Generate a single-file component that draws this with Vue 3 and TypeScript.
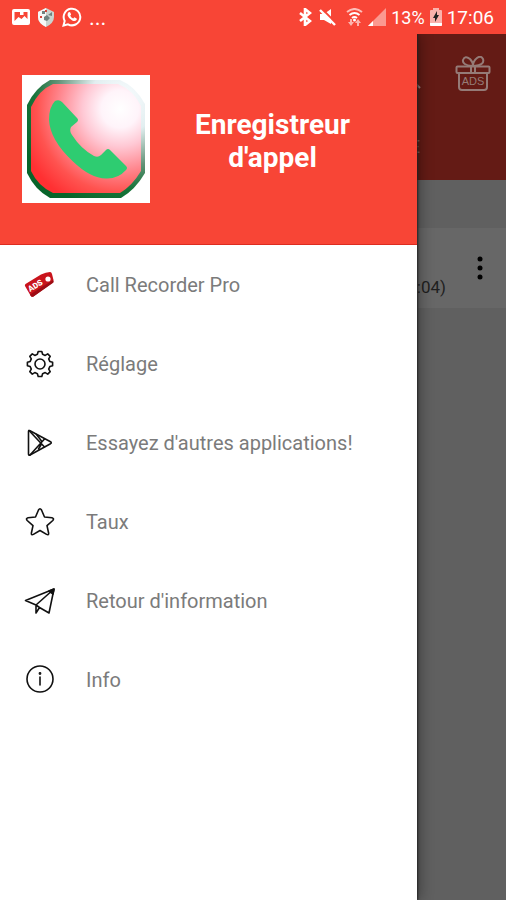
<script setup lang="ts">
import { ref } from 'vue'

type IconName = 'tag' | 'gear' | 'play' | 'star' | 'plane' | 'info'

interface MenuEntry {
  icon: IconName
  label: string
}

const entries: MenuEntry[] = [
  { icon: 'tag', label: 'Call Recorder Pro' },
  { icon: 'gear', label: 'Réglage' },
  { icon: 'play', label: "Essayez d'autres applications!" },
  { icon: 'star', label: 'Taux' },
  { icon: 'plane', label: "Retour d'information" },
  { icon: 'info', label: 'Info' },
]

const battery = ref('13%')
const clock = ref('17:06')
</script>

<template>
  <div class="screen">
    <header class="status">
      <div class="status-left">
        <svg width="18" height="16" viewBox="0 0 18 16" aria-hidden="true">
          <path fill="#fff" fill-rule="evenodd" d="M2 0h14q2 0 2 2v12q0 2-2 2H2q-2 0-2-2V2q0-2 2-2zM2.500 3v9l4-4 3 2 3-3 3 3V3h-4v3H8V3z" />
        </svg>
        <svg width="18" height="19" viewBox="0 0 18 19" aria-hidden="true">
          <path fill="#c9d3cf" d="M9 0 17 4V9q0 6-8 10Q1 15 1 9V4z" />
          <path fill="#f6f8f7" d="M9 0 1 4v5q0 6 8 10z" />
          <path fill="#70827f" d="M5 3h3v3H5zM11 7l4-3v4zM7 9l3-2 3 3-3 3-3-1z" />
          <path fill="#d6453a" d="M3 8h2v2H3zM8 2h2v2H8z" />
        </svg>
        <svg width="20" height="20" viewBox="0 0 20 20" aria-hidden="true">
          <path fill="none" stroke="#fff" stroke-width="2" d="M1.500 18.500 2.700 14A8.300 8.300 0 1 1 6 17.300z" />
          <path fill="#fff" d="M6.500 5.200q1.300-.8 1.900.5l.7 1.700-.9 1.300q1 2 3 2.800l1.200-1.200 2.200 1.100q.6.500-.1 1.700-1.500 1.700-4.300.3-3.400-1.600-4.600-5-.3-2 .9-3.200z" />
        </svg>
        <span class="dots">...</span>
      </div>
      <div class="status-right">
        <svg width="13" height="18" viewBox="0 0 13 18" aria-hidden="true">
          <path fill="none" stroke="#fff" stroke-width="2.600" d="m1 5 10 8-5 4V1l5 4-10 8" />
        </svg>
        <svg class="mute" width="18" height="17" viewBox="0 0 18 17" aria-hidden="true">
          <path fill="#fff" d="M1 5h4l7-5v15l-7-4H1z" />
          <path stroke="#f84536" stroke-width="2" d="m3 0 14 14" />
          <path stroke="#fff" stroke-width="2.400" d="m1 1 15 15" />
        </svg>
        <svg width="17" height="18" viewBox="0 0 17 18" aria-hidden="true">
          <g fill="none" stroke="#fff" stroke-width="2">
            <path opacity=".65" d="M1 4q7.500-6 15 0" />
            <path d="M3.500 7q5-4 10 0M6 10q2.500-2 5 0" />
          </g>
          <path fill="#fff" opacity=".6" d="m5 18-3-4h2v-3h2v3h2zM12 11l3 4h-2v3h-2v-3H9z" />
          <circle cx="8.500" cy="12" r="1.500" fill="#fff" />
        </svg>
        <svg width="18" height="18" viewBox="0 0 18 18" aria-hidden="true">
          <path fill="#fff" opacity=".45" d="M18 0v18H0z" />
          <path fill="#fff" d="M5 13v5H0z" />
        </svg>
        <span class="battery">{{ battery }}</span>
        <svg width="12" height="18" viewBox="0 0 12 18" aria-hidden="true">
          <path fill="#fbb2ac" d="M3 0h6v2h2q1 0 1 1v14q0 1-1 1H1q-1 0-1-1V3q0-1 1-1h2z" />
          <path fill="#fff" d="M0 15h12v2q0 1-1 1H1q-1 0-1-1z" />
          <path fill="#222" d="M7 3 3 10h2v4l4-7H7z" />
        </svg>
        <time>{{ clock }}</time>
      </div>
    </header>

    <div class="body">
      <main class="page">
        <div class="appbar">
          <div class="tools">
            <svg width="24" height="24" viewBox="0 0 24 24" aria-hidden="true">
              <path fill="none" stroke="#a08480" stroke-width="2" d="M14 13l7 7M16 8A7 7 0 1 1 2 8a7 7 0 0 1 14 0z" />
            </svg>
            <button type="button" class="gift" aria-label="ADS">
              <svg width="36" height="36" viewBox="0 0 36 36" aria-hidden="true">
                <g fill="none" stroke="#957b77" stroke-width="2" stroke-linejoin="round">
                  <rect x="1.500" y="10.500" width="33" height="6.500" rx="1" />
                  <path d="M4 17V31q0 3 3 3h22q3 0 3-3V17M16 10.500V17M20 10.500V17" />
                  <path d="M17 10Q7 9 8 4q2-5 7-1 3 3 3 7Q18 5 22 2q4-3 6 1 2 6-9 7" />
                </g>
                <text x="18" y="29" text-anchor="middle" class="gift-text">ADS</text>
              </svg>
            </button>
          </div>
          <span class="tab">E</span>
        </div>
        <div class="strip"></div>
        <div class="record">
          <span class="duration">:04)</span>
          <button type="button" class="more" aria-label="Options">
            <svg width="6" height="24" viewBox="0 0 6 24" aria-hidden="true">
              <circle cx="3" cy="3" r="2.500" />
              <circle cx="3" cy="12" r="2.500" />
              <circle cx="3" cy="21" r="2.500" />
            </svg>
          </button>
        </div>
      </main>

      <aside class="drawer">
        <div class="banner">
          <svg class="logo" width="128" height="128" viewBox="0 0 128 128" aria-hidden="true">
            <defs>
              <radialGradient id="shine" gradientUnits="userSpaceOnUse" cx="98" cy="34" r="104">
                <stop offset="0" stop-color="#fff" />
                <stop offset=".18" stop-color="#fff4fa" />
                <stop offset=".36" stop-color="#ffc8d4" />
                <stop offset=".58" stop-color="#ff8a92" />
                <stop offset=".8" stop-color="#ff5350" />
                <stop offset="1" stop-color="#ff3032" />
              </radialGradient>
              <radialGradient id="rim" gradientUnits="userSpaceOnUse" cx="102" cy="24" r="112">
                <stop offset="0" stop-color="#fafdff" />
                <stop offset=".3" stop-color="#e2eef0" />
                <stop offset=".6" stop-color="#66947a" />
                <stop offset=".8" stop-color="#17743a" />
                <stop offset="1" stop-color="#08642a" />
              </radialGradient>
            </defs>
            <path fill="#fff" d="M0 0h128v128H0z" />
            <path fill="url(#rim)" d="M28 5h70q15 6 25 24v69q-10 17-24 25H28Q13 115 5 98V30Q13 13 28 5z" />
            <path fill="url(#shine)" d="M31 9h65q15 6 23 22v65q-9 15-21 22H31Q16 111 9 96V32Q17 15 31 9z" />
            <path fill="#2ecc71" d="M33 26q4-2 7 1l15 16q2 2 0 4l-6 5q-2 4 1 8 9 14 22 21 4 2 7-1l5-5q2-2 4 0l16 16q2 2 0 4-8 9-20 8.500-16-.5-33-17Q28 65 27 45q0-13 6-19z" />
          </svg>
          <h1>Enregistreur d'appel</h1>
        </div>
        <nav>
          <a v-for="entry in entries" :key="entry.label" href="#" class="row">
            <svg class="icon" width="32" height="32" viewBox="0 0 32 32" aria-hidden="true">
              <template v-if="entry.icon === 'tag'">
                <path fill="#c9141c" d="M1.500 15 17 5.500q5-2.500 9-2.500 1.500 0 2 2l1.500 6q0 2-1.500 3L9.500 27.500q-2 1-3-1L1 17q-.5-1 .5-2z" />
                <path fill="#9d0c13" d="m6 25.500 23-14.500.8 2q-.3.600-1.300 1.200L9.500 27.500q-2 1-3-1z" />
                <circle cx="24" cy="10" r="2.600" fill="#fff" />
                <text x="6" y="23" transform="rotate(-31 6 23)" class="tag-text">ADS</text>
              </template>
              <g v-else class="line">
                <template v-if="entry.icon === 'gear'">
                  <path d="M14.200 3.500h3.600l.8 2.800 2.600 1.100 2.500-1.500 2.500 2.500-1.500 2.500 1.100 2.500 2.800.8v3.600l-2.800.8-1.100 2.500 1.500 2.500-2.500 2.500-2.500-1.500-2.600 1.100-.8 2.800h-3.600l-.8-2.800-2.600-1.100-2.500 1.500-2.500-2.500 1.500-2.500-1.100-2.500-2.800-.8v-3.600l2.800-.8 1.100-2.500-1.500-2.500 2.500-2.500 2.500 1.500 2.600-1.100z" />
                  <circle cx="16" cy="16" r="5" />
                </template>
                <template v-else-if="entry.icon === 'play'">
                  <path d="M4.500 4.500q0-1.500 1.500-.8l20.500 11q1.500 1 0 2L6 28q-1.500.8-1.500-1z" />
                  <path d="M5 3.500 20.500 20M6 28l14.500-16M12.500 7.500 17.500 14M17.500 17l-3 5" />
                </template>
                <path v-else-if="entry.icon === 'star'" d="M14.500 4q1.500-2.500 3 0l3 7 7.500.8q2.500.7.800 2.700L23 19.700l1.600 7.300q.2 2.500-2 1.400L16 24.500l-6.600 3.900q-2.200 1.100-2-1.400L9 19.700l-5.800-5.200q-1.700-2 .8-2.700l7.500-.8z" />
                <template v-else-if="entry.icon === 'plane'">
                  <path d="M1.500 15.500 30 4 25 28l-9.500-5.500L12 28v-8zM12 20 30 4M12 28l3.500-5.500L12 20" />
                  <path class="solid" d="M25 6l5-2-1 5z" />
                </template>
                <template v-else>
                  <circle cx="16" cy="15" r="13" />
                  <path d="M16 13v8" />
                  <circle cx="16" cy="9.500" r=".6" class="solid" />
                </template>
              </g>
            </svg>
            <span>{{ entry.label }}</span>
          </a>
        </nav>
      </aside>
    </div>
  </div>
</template>

<style>
body {
  margin: 0;
}
</style>

<style scoped>
.screen {
  display: flex;
  flex-direction: column;
  min-height: 100vh;
  font-family: Roboto, 'Liberation Sans', sans-serif;
  background: #606060;
}

.status {
  display: flex;
  justify-content: space-between;
  align-items: center;
  height: 34px;
  padding: 0 12px;
  background: #f84536;
  color: #fff;
  font-size: 19px;
}

.status-left,
.status-right {
  display: flex;
  align-items: center;
}

.status-left {
  gap: 7px;
}

.status-right {
  gap: 5px;
}

.dots {
  font-size: 22px;
}

.battery {
  font-size: 18px;
}

.mute {
  margin: 0 4px 0 2px;
}

.body {
  position: relative;
  display: flex;
  flex: 1;
}

.page {
  flex: 1;
}

.appbar {
  display: flex;
  flex-direction: column;
  align-items: flex-end;
  gap: 44px;
  height: 146px;
  padding: 22px 15px 0 0;
  box-sizing: border-box;
  background: #641b15;
}

.tools {
  display: flex;
  align-items: flex-end;
  gap: 32px;
}

.gift,
.more {
  display: flex;
  padding: 0;
  border: 0;
  background: none;
}

.gift-text {
  fill: #957b77;
  font-size: 11px;
  font-weight: 500;
}

.tab {
  margin-right: 71px;
  color: #8f6b67;
  font-size: 18px;
  line-height: 22px;
}

.strip {
  height: 48px;
  background: #606060;
}

.record {
  display: flex;
  justify-content: flex-end;
  align-items: center;
  gap: 31px;
  height: 80px;
  padding-right: 23px;
  background: #676767;
}

.duration {
  padding-top: 38px;
  color: #1f1f1f;
  font-size: 17px;
}

.drawer {
  position: absolute;
  inset: 0 89px 0 0;
  background: #fff;
  box-shadow: 1px 0 2px #222, 4px 0 12px rgba(0, 0, 0, 0.3);
  clip-path: inset(0 -20px 0 0);
}

.banner {
  display: flex;
  align-items: center;
  height: 211px;
  padding: 0 22px;
  border-bottom: 1px solid #dd2c20;
  box-sizing: border-box;
  background: #f84536;
}

.logo {
  flex: none;
}

h1 {
  flex: 1;
  margin: 0;
  padding: 4px 40px 0;
  color: #fff;
  font-size: 28px;
  font-weight: 700;
  line-height: 33px;
  text-align: center;
}

.row {
  display: flex;
  align-items: center;
  gap: 30px;
  height: 79px;
  padding: 0 24px;
  color: #7b7b7b;
  font-size: 20px;
  text-decoration: none;
}

.icon {
  flex: none;
}

.line {
  fill: none;
  stroke: #111;
  stroke-width: 1.6px;
  stroke-linejoin: round;
  stroke-linecap: round;
}

.line .solid {
  fill: #111;
}

.tag-text {
  fill: #fff;
  font-size: 8px;
  font-weight: 900;
}
</style>
